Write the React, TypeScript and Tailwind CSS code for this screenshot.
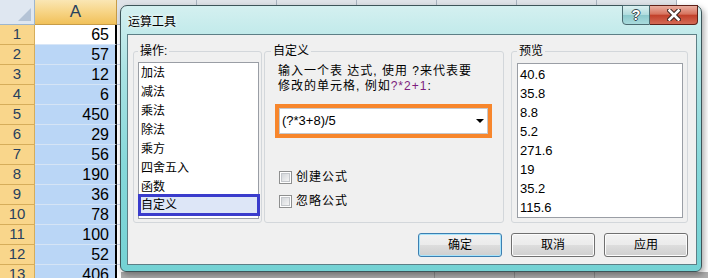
import React from "react";

const values = [65, 57, 12, 6, 450, 29, 56, 190, 36, 78, 100, 52, 406];
const ops = ["加法", "减法", "乘法", "除法", "乘方", "四舍五入", "函数"];
const preview = ["40.6", "35.8", "8.8", "5.2", "271.6", "19", "35.2", "115.6"];
const otherCols = [0, 1, 2, 3, 4, 5, 6];

function Checkbox({ label }: { label: string }) {
  return (
    <div className="flex items-center h-[16px] ml-[8px]">
      <div className="w-[13px] h-[13px] border border-[#8e8f8f] bg-white p-[1px]">
        <div className="w-full h-full border border-[#c4c7cb] bg-[linear-gradient(135deg,#d4d7db,#f4f4f4)]" />
      </div>
      <span className="ml-[4px] text-[12px] leading-[16px] tracking-[1px] text-black">{label}</span>
    </div>
  );
}

function Button({ label, primary }: { label: string; primary?: boolean }) {
  return (
    <div
      className={
        primary
          ? "w-[84px] h-[24px] rounded-[3px] border border-[#3c7fb1] shadow-[inset_0_0_0_1px_#a8e4fb] bg-[linear-gradient(180deg,#f2f2f2_0%,#ebebeb_50%,#dddddd_51%,#cfcfcf_100%)] flex items-center justify-center text-[12px] leading-[14px] text-black"
          : "w-[84px] h-[24px] rounded-[3px] border border-[#707070] shadow-[inset_0_0_0_1px_#fcfcfc] bg-[linear-gradient(180deg,#f2f2f2_0%,#ebebeb_50%,#dddddd_51%,#cfcfcf_100%)] flex items-center justify-center text-[12px] leading-[14px] text-black"
      }
    >
      {label}
    </div>
  );
}

export default function App() {
  return (
    <div className="relative w-[708px] h-[278px] overflow-hidden bg-white font-['Liberation_Sans','Noto_Sans_CJK_SC',sans-serif]">
      {/* Spreadsheet */}
      <div className="flex flex-col">
        <div className="flex h-[25px]">
          <div className="relative w-[35px] shrink-0 bg-[#dfe7f1] border-r border-b border-[#9eb6ce]">
            <div className="absolute right-[3px] bottom-[3px] w-0 h-0 border-l-[13px] border-l-transparent border-b-[13px] border-b-[#b4c3d6]" />
          </div>
          <div className="w-[82px] shrink-0 flex items-center justify-center text-[17px] text-[#27405e] bg-[linear-gradient(180deg,#fae6b4_0%,#f7d68a_45%,#f1c15a_100%)] border-r border-b border-[#c79c48]">
            A
          </div>
          {otherCols.map((c) => (
            <div key={c} className="w-[80px] shrink-0 bg-[#dfe3e8] border-r border-b border-[#a9b3bf]" />
          ))}
        </div>
        {values.map((v, i) => (
          <div key={i} className="flex h-[20px]">
            <div className="w-[35px] shrink-0 flex items-center justify-center text-[15px] text-[#27405e] bg-[#f9d68b] border-r border-b border-[#d6ad5a]">
              {i + 1}
            </div>
            <div
              className={
                i === 0
                  ? "w-[82px] shrink-0 flex items-center justify-end pr-[6px] text-[16px] text-black bg-white border-r-2 border-r-black border-b border-b-[#d8e6f7]"
                  : "w-[82px] shrink-0 flex items-center justify-end pr-[6px] text-[16px] text-black bg-[#bad6f6] border-r-2 border-r-black border-b border-b-[#d5e4f5]"
              }
            >
              {v}
            </div>
            {otherCols.map((c) => (
              <div key={c} className="w-[80px] shrink-0 bg-white border-r border-b border-[#d0d7e5]" />
            ))}
          </div>
        ))}
      </div>

      {/* shadow strip below dialog */}
      <div className="absolute left-[121px] top-[272px] right-0 h-[6px] flex bg-[#adadad]">
        <div className="w-[314px] shrink-0 border-r border-[#8c8c8c]" />
        <div className="w-[80px] shrink-0 border-r border-[#8c8c8c]" />
        <div className="w-[80px] shrink-0 border-r border-[#8c8c8c]" />
      </div>

      {/* Dialog */}
      <div className="absolute left-[120px] top-[5px] w-[582px] h-[267px] rounded-t-[7px] rounded-b-[6px] border border-[#3d5559] bg-[linear-gradient(180deg,#d4f0f0_0%,#a9e2e3_25%,#86d8da_60%,#74d2d4_100%)] shadow-[2px_3px_6px_rgba(0,0,0,0.35)] flex flex-col pl-[6px] pr-[4px] pb-[6px]">
        {/* Title bar */}
        <div className="relative h-[28px] shrink-0">
          <div className="pt-[9px] pl-[1px] text-[12px] leading-[14px] text-black [text-shadow:0_0_5px_#ffffff,0_0_3px_#ffffff]">
            运算工具
          </div>
          <div className="absolute top-[-1px] right-[-1px] flex h-[20px]">
            <div className="w-[28px] rounded-bl-[4px] border border-[#4b6a70] bg-[linear-gradient(180deg,#dcf1f1_0%,#b1dcde_48%,#8cc9cc_52%,#a9dbdd_100%)] flex items-center justify-center">
              <span className="text-[14px] leading-[14px] font-bold text-white [text-shadow:1px_0_0_#3a4a50,-1px_0_0_#3a4a50,0_1px_0_#3a4a50,0_-1px_0_#3a4a50]">
                ?
              </span>
            </div>
            <div className="w-[48px] rounded-br-[4px] border border-l-0 border-[#5e2118] bg-[linear-gradient(180deg,#eab0a2_0%,#d7735e_45%,#c2412b_52%,#d46a55_100%)] flex items-center justify-center">
              <svg width="14" height="12" viewBox="0 0 14 12">
                <path d="M2.5 1.5 L11.5 10.5 M11.5 1.5 L2.5 10.5" stroke="#3b2520" strokeWidth="4.6" strokeLinecap="square" />
                <path d="M2.5 1.5 L11.5 10.5 M11.5 1.5 L2.5 10.5" stroke="#ffffff" strokeWidth="2.6" strokeLinecap="square" />
              </svg>
            </div>
          </div>
        </div>

        {/* Client area */}
        <div className="flex-1 flex flex-col bg-[#f0f0f0] border border-[#5d7f86]">
          <div className="flex items-start pl-[5px] pt-[9px]">
            {/* Group 1 */}
            <fieldset className="w-[129px] h-[179px] shrink-0 border border-[#d3d7db] rounded-[3px] pl-[4px]">
              <legend className="px-[2px] text-[12px] leading-[14px] text-black">操作:</legend>
              <div className="mt-[4px] w-[121px] h-[157px] border border-[#9a9ea5] bg-white pt-[1px] flex flex-col">
                {ops.map((o) => (
                  <div key={o} className="h-[19px] pl-[2px] text-[12px] leading-[19px] text-black">
                    {o}
                  </div>
                ))}
                <div className="-mt-[3px] -ml-[1px] -mr-[2px] h-[22px] border-[3px] border-[#3a3ccc] bg-[#dde6f7] text-[12px] leading-[16px] text-black">
                  自定义
                </div>
              </div>
            </fieldset>

            {/* Group 2 */}
            <fieldset className="ml-[2px] w-[240px] h-[179px] shrink-0 border border-[#d3d7db] rounded-[3px] pl-[6px]">
              <legend className="px-[2px] text-[12px] leading-[14px] text-black">自定义</legend>
              <div className="mt-[6px] ml-[7px] text-[12px] leading-[15px] tracking-[1px] text-black whitespace-nowrap">
                <div>输入一个表 达式, 使用 ?来代表要</div>
                <div>
                  修改的单元格, 例如<span className="text-[#7d1d7d]">?*2+1</span>:
                </div>
              </div>
              <div className="mt-[10px] ml-[4px] w-[217px] h-[34px] border-4 border-[#f7862c]">
                <div className="h-full bg-white border border-[#c5c8cc] flex items-center justify-between pl-[2px] pr-[3px]">
                  <span className="text-[13px] leading-[16px] text-black">(?*3+8)/5</span>
                  <div className="w-0 h-0 border-x-[4px] border-x-transparent border-t-[4px] border-t-black" />
                </div>
              </div>
              <div className="mt-[31px] flex flex-col gap-[8px]">
                <Checkbox label="创建公式" />
                <Checkbox label="忽略公式" />
              </div>
            </fieldset>

            {/* Group 3 */}
            <fieldset className="ml-[7px] w-[177px] h-[179px] shrink-0 border border-[#d3d7db] rounded-[3px] pl-[5px]">
              <legend className="px-[2px] text-[12px] leading-[14px] text-black">预览</legend>
              <div className="mt-[5px] w-[166px] h-[155px] border border-[#9a9ea5] bg-white pt-[1px] flex flex-col">
                {preview.map((p) => (
                  <div key={p} className="h-[19px] pl-[2px] text-[13px] leading-[19px] text-black">
                    {p}
                  </div>
                ))}
              </div>
            </fieldset>
          </div>

          {/* Buttons */}
          <div className="mt-[10px] mr-[8px] flex justify-end gap-[9px]">
            <Button label="确定" primary />
            <Button label="取消" />
            <Button label="应用" />
          </div>
        </div>
      </div>
    </div>
  );
}
